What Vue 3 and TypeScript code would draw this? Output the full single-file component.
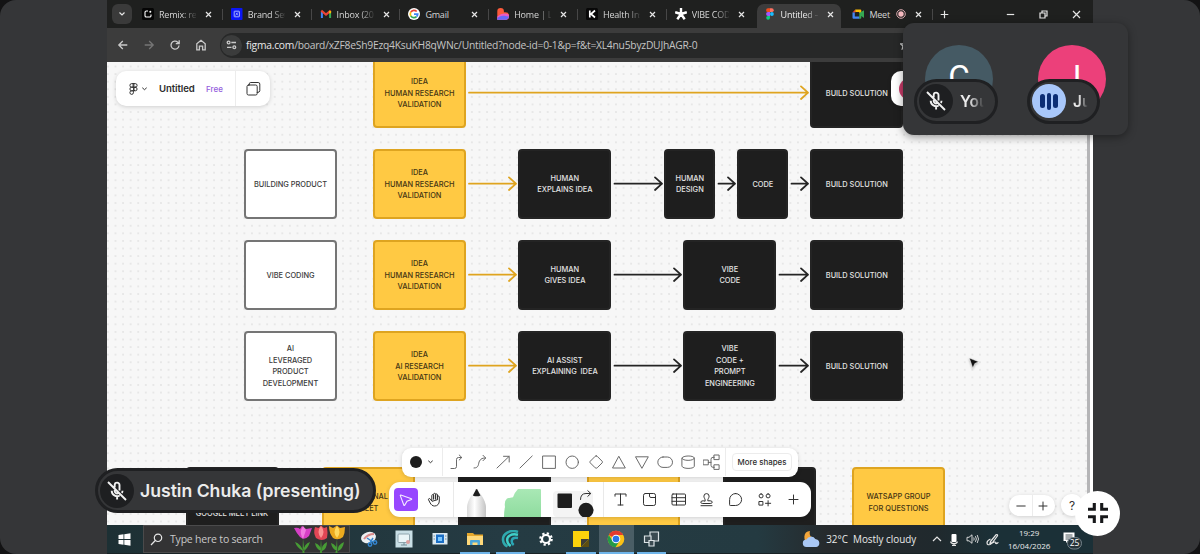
<script setup lang="ts">
interface Tab { icon: string; title: string; active?: boolean; rec?: boolean }
interface BoardNode { x: number; y: number; w: number; kind: 'plain' | 'gold' | 'dark'; lines: string[] }
interface Arrow { x1: number; x2: number; y: number; gold?: boolean }

const tabs: Tab[] = [
  { icon: 'remix', title: 'Remix: re' },
  { icon: 'brand', title: 'Brand Set' },
  { icon: 'gmail', title: 'Inbox (20' },
  { icon: 'google', title: 'Gmail' },
  { icon: 'lovable', title: 'Home | Lo' },
  { icon: 'k', title: 'Health Ins' },
  { icon: 'star', title: 'VIBE COD' },
  { icon: 'figma', title: 'Untitled –', active: true },
  { icon: 'meet', title: 'Meet', rec: true },
]

const idea = ['IDEA', 'HUMAN RESEARCH', 'VALIDATION']
const nodes: BoardNode[] = [
  { x: 266, y: -4.5, w: 93, kind: 'gold', lines: idea },
  { x: 703.3, y: -4.5, w: 93, kind: 'dark', lines: ['BUILD SOLUTION'] },

  { x: 137, y: 86.5, w: 93, kind: 'plain', lines: ['BUILDING PRODUCT'] },
  { x: 266, y: 86.5, w: 93, kind: 'gold', lines: idea },
  { x: 411.4, y: 86.5, w: 93, kind: 'dark', lines: ['HUMAN', 'EXPLAINS IDEA'] },
  { x: 557.4, y: 86.5, w: 51, kind: 'dark', lines: ['HUMAN', 'DESIGN'] },
  { x: 630.4, y: 86.5, w: 51, kind: 'dark', lines: ['CODE'] },
  { x: 703.3, y: 86.5, w: 93, kind: 'dark', lines: ['BUILD SOLUTION'] },

  { x: 137, y: 177.5, w: 93, kind: 'plain', lines: ['VIBE CODING'] },
  { x: 266, y: 177.5, w: 93, kind: 'gold', lines: idea },
  { x: 411.4, y: 177.5, w: 93, kind: 'dark', lines: ['HUMAN', 'GIVES IDEA'] },
  { x: 576.4, y: 177.5, w: 93, kind: 'dark', lines: ['VIBE', 'CODE'] },
  { x: 703.3, y: 177.5, w: 93, kind: 'dark', lines: ['BUILD SOLUTION'] },

  { x: 137, y: 268.5, w: 93, kind: 'plain', lines: ['AI', 'LEVERAGED', 'PRODUCT', 'DEVELOPMENT'] },
  { x: 266, y: 268.5, w: 93, kind: 'gold', lines: ['IDEA', 'AI RESEARCH', 'VALIDATION'] },
  { x: 411.4, y: 268.5, w: 93, kind: 'dark', lines: ['AI ASSIST', 'EXPLAINING  IDEA'] },
  { x: 576.4, y: 268.5, w: 93, kind: 'dark', lines: ['VIBE', 'CODE +', 'PROMPT', 'ENGINEERING'] },
  { x: 703.3, y: 268.5, w: 93, kind: 'dark', lines: ['BUILD SOLUTION'] },

  { x: 78.5, y: 405, w: 93, kind: 'dark', lines: ['', '', 'GOOGLE MEET LINK'] },
  { x: 214.7, y: 405, w: 93, kind: 'gold', lines: ['PERSONAL', 'MEET'] },
  { x: 351, y: 405, w: 93, kind: 'dark', lines: [] },
  { x: 480, y: 405, w: 93, kind: 'gold', lines: [] },
  { x: 616, y: 405, w: 93, kind: 'dark', lines: [] },
  { x: 745, y: 405, w: 93, kind: 'gold', lines: ['WATSAPP GROUP', 'FOR QUESTIONS'] },
]

const arrows: Arrow[] = [
  { x1: 362, x2: 701, y: 30.7, gold: true },
  { x1: 362, x2: 409, y: 121.7, gold: true },
  { x1: 507.5, x2: 555, y: 121.7 },
  { x1: 611.5, x2: 628, y: 121.7 },
  { x1: 684.5, x2: 701, y: 121.7 },
  { x1: 362, x2: 409, y: 212.7, gold: true },
  { x1: 507.5, x2: 574, y: 212.7 },
  { x1: 672.5, x2: 701, y: 212.7 },
  { x1: 362, x2: 409, y: 303.7, gold: true },
  { x1: 507.5, x2: 574, y: 303.7 },
  { x1: 672.5, x2: 701, y: 303.7 },
]
const arrowPath = (a: Arrow) => `M${a.x1} ${a.y}H${a.x2}M${a.x2 - 7} ${a.y - 6.3}L${a.x2} ${a.y}L${a.x2 - 7} ${a.y + 6.3}`

const shapes: string[] = [
  'M2 14.5h3.5q2 0 2-2v-7q0-2 2-2h3M10.2 1l2.6 2.5-2.6 2.5',
  'M2 14c5.500 0 4-4.500 5.500-7S10.500 4 13.500 4M11 1.300l2.700 2.700-2.700 2.700',
  'M2 14L14 2.500M8.500 2.300h5.700v5.700',
  'M2 14L14.200 2',
  'M2 2h12.400v12.400H2z',
  'M14.400 8.200a6.200 6.200 0 1 1-12.400 0a6.200 6.200 0 1 1 12.400 0z',
  'M8.200 1.900q.6 0 1 .4l5 5q.6.700 0 1.500l-5 5q-1 .9-2 0l-5-5q-.7-.8 0-1.500l5-5q.4-.4 1-.4z',
  'M8 2.600L14.300 14H1.900z',
  'M1.900 2.800h12.400L8.100 14z',
  'M6 3h4.300a5.200 5.200 0 0 1 0 10.400H6A5.200 5.200 0 0 1 6 3z',
  'M1.900 4.200c0-3 12.400-3 12.400 0v8c0 3-12.400 3-12.400 0zM1.900 4.200c0 3 12.400 3 12.400 0',
  'M.5 6h4.800v4.800H.5zM11.300 1h4.800v4.600h-4.800zM11.300 10.800h4.800v4.600h-4.800zM5.300 8.400h2.700M11.300 3.300H10q-2 0-2 2v6q0 2 2 2h1.300',
]

const tools: string[] = [
  'M3 5.200V3h11v2.200M8.500 3v11M6 14h5',
  'M4.300 2.500h8.400q1.800 0 1.800 1.800v8.400q0 1.800-1.800 1.800H4.300q-1.800 0-1.800-1.800V4.300q0-1.800 1.800-1.800zM8.500 2.500v2.500q0 1.500 1.500 1.500h4.500',
  'M3 3h11.500q1 0 1 1v9q0 1-1 1H3q-1 0-1-1V4q0-1 1-1zM2 6.700h13.500M2 10.300h13.500M6.500 3v11',
  'M3 14.700h11M7.200 9.800c.4-1.600-1.300-2.700-1.300-4.600a2.600 2.600 0 0 1 5.200 0c0 1.900-1.700 3-1.300 4.600h2.400q2 0 2 1.400 0 1.300-2 1.300H4.800q-2 0-2-1.300 0-1.400 2-1.400z',
  'M8.600 2.500a6 6 0 1 1 0 12H3.300q-.9 0-.7-.9V8.500a6 6 0 0 1 6-6z',
  'M5.100 2.900a2 2 0 1 1 0 4 2 2 0 0 1 0-4zM12.100 2.900a2 2 0 1 1 0 4 2 2 0 0 1 0-4zM3.300 10.500h3.600v3.600H3.300zM12.100 9.700v5.200M9.500 12.300h5.200',
  'M8.500 4v9M4 8.500h9',
]

const apps = ['snip', 'photo', 'mail', 'folder', 'edge', 'gear', 'notes', 'chrome', 'task']
const running = new Set(['folder', 'edge', 'notes', 'chrome', 'task'])
</script>

<template>
  <div class="screen">
    <div class="stage">
      <main class="share">
        <header class="tabstrip">
          <button class="tab-search"><svg width="8" height="6" viewBox="0 0 8 6"><path d="M1.500 1.500L4 4l2.500-2.500" class="lt" /></svg></button>
          <div class="tabs">
            <div v-for="t in tabs" :key="t.title" class="tab" :class="{ active: t.active }">
              <svg class="fav" width="12" height="12" viewBox="0 0 12 12">
                <template v-if="t.icon === 'remix'">
                  <rect width="12" height="12" rx="1.500" fill="#050505" />
                  <path d="M6 3H4.300Q3 3 3 4.300v3.400Q3 9 4.300 9h3.400Q9 9 9 7.700V6.500" fill="none" stroke="#fff" stroke-width="1.100" /><circle cx="8.300" cy="3.700" r="1" fill="#fff" />
                </template>
                <template v-else-if="t.icon === 'brand'">
                  <rect width="11.500" height="12" rx="1" fill="#0b16f5" />
                  <rect x="3.200" y="3.200" width="5.200" height="5.600" rx=".5" fill="none" stroke="#b9c3ff" stroke-width=".9" /><path d="M4.300 7.600l2.800-3.200M5 4.800l2 2.600" stroke="#b9c3ff" stroke-width=".7" />
                </template>
                <template v-else-if="t.icon === 'gmail'">
                  <path d="M1.900 10V3.500" stroke="#4285f4" stroke-width="2" /><path d="M10.100 10V3.500" stroke="#34a853" stroke-width="2" /><path d="M1.300 2.700L6 6.500l4.700-3.800" fill="none" stroke="#ea4335" stroke-width="2.200" />
                  <path d="M10.100 5.300V2.900" stroke="#fbbc04" stroke-width="2" />
                </template>
                <template v-else-if="t.icon === 'google'">
                  <circle cx="6" cy="6" r="6" fill="#fff" />
                  <g fill="none" stroke-width="1.700"><path d="M8.700 3.500A3.700 3.700 0 0 0 2.800 4.100" stroke="#ea4335" /><path d="M2.800 4.100a3.700 3.700 0 0 0 0 3.800" stroke="#fbbc04" /><path d="M2.800 7.900a3.700 3.700 0 0 0 5.700.8" stroke="#34a853" /><path d="M8.500 8.700A3.700 3.700 0 0 0 9.700 6.100H6" stroke="#4285f4" /></g>
                </template>
                <template v-else-if="t.icon === 'lovable'">
                  <path d="M.3 3.300a3.300 3.300 0 0 1 6.600 0v1h1.500a3.700 3.700 0 0 1 0 7.500H.3z" fill="#fc5a3a" /><path d="M.3 8.500q3.500-3 7-3 3.200 0 4.500 1.200a3.700 3.700 0 0 1-3.400 5.100H.3z" fill="#e85bc4" /><path d="M.3 9.800q4-2.500 7-2 2.600.4 4.600.8a3.700 3.700 0 0 1-3.500 3.200H.3z" fill="#6a68f5" />
                </template>
                <template v-else-if="t.icon === 'k'">
                  <rect width="12" height="12" rx="1.500" fill="#080808" /><path d="M3.800 2.500v7M9 2.500L5 6l4 3.500" fill="none" stroke="#fff" stroke-width="1.700" />
                </template>
                <template v-else-if="t.icon === 'star'">
                  <path d="M6 6V0M6 6l5.800-1.800M6 6l3.700 5.300M6 6l-3.700 5.300M6 6L.2 4.200" stroke="#fff" stroke-width="2.400" />
                </template>
                <template v-else-if="t.icon === 'figma'">
                  <path d="M6 .3H4a1.900 1.900 0 0 0 0 3.800h2z" fill="#f24e1e" /><path d="M6 .3h1.800a1.900 1.900 0 0 1 0 3.800H6z" fill="#ff7262" /><path d="M6 4.100H4a1.900 1.900 0 0 0 0 3.800h2z" fill="#a259ff" /><circle cx="7.900" cy="6" r="1.900" fill="#1abcfe" /><path d="M6 7.900H4a1.900 1.900 0 1 0 2 1.900z" fill="#0acf83" />
                </template>
                <template v-else>
                  <path d="M3.300 1.500v3H.5z" fill="#ea4335" /><path d="M3.300 1.500h5q1 0 1 1V5h-2V4H3.300z" fill="#fbbc04" /><path d="M.5 4.500h2.300v4H7.500v2.200H1.500q-1 0-1-1z" fill="#4285f4" /><path d="M7.300 5L12 2.300v7.600L9.300 8v1.700q0 1-1 1h-1z" fill="#34a853" />
                </template>
              </svg>
              <span class="title" :class="{ short: t.rec }">{{ t.title }}</span>
              <svg v-if="t.rec" class="rec" width="10" height="10" viewBox="0 0 10 10"><circle cx="5" cy="5" r="4.300" fill="none" stroke="#d8a9ae" /><circle cx="5" cy="5" r="2.700" fill="#f5b9bf" /></svg>
              <svg class="x" width="7" height="7" viewBox="0 0 7 7"><path d="M1 1l5 5M6 1L1 6" class="lt" /></svg>
            </div>
          </div>
          <svg class="plus" width="9" height="9" viewBox="0 0 9 9"><path d="M4.500.700v7.600M.700 4.500h7.600" class="lt" /></svg>
          <div class="winctl">
            <svg width="9" height="9" viewBox="0 0 9 9"><path d="M.8 4.500h7.400" class="lt" /></svg>
            <svg width="9" height="9" viewBox="0 0 9 9"><path d="M1 3h5v5H1zM3 3V1h5v5H6" class="lt" /></svg>
            <svg width="9" height="9" viewBox="0 0 9 9"><path d="M1 1l7 7M8 1L1 8" class="lt" /></svg>
          </div>
        </header>

        <div class="address">
          <svg width="12" height="12" viewBox="0 0 12 12"><path d="M10.300 6H2M5.800 2L1.800 6l4 4" class="nav" /></svg>
          <svg width="12" height="12" viewBox="0 0 12 12"><path d="M1.700 6H10M6.200 2l4 4-4 4" class="nav dim" /></svg>
          <svg width="12" height="12" viewBox="0 0 12 12"><path d="M10 6.500A4 4 0 1 1 8.700 3.200L10 4.400M10.200 1.200v3.400H6.800" class="nav" /></svg>
          <svg width="12" height="12" viewBox="0 0 12 12"><path d="M1.800 10.800V4.800L6 1.300l4.200 3.500v6H7.600V7.200H4.400v3.600z" class="nav" /></svg>
          <div class="field">
            <span class="tune"><svg width="11" height="10" viewBox="0 0 11 10"><g class="nav"><circle cx="2.600" cy="2.500" r="1.400" /><path d="M5.300 2.500H10M1 7.300h4.500" /><circle cx="8.300" cy="7.300" r="1.400" /></g></svg></span>
            <span class="url"><b>figma.com</b>/board/xZF8eSh9Ezq4KsuKH8qWNc/Untitled?node-id=0-1&amp;p=f&amp;t=XL4nu5byzDUJhAGR-0</span>
            <svg class="bookmark" width="10" height="10" viewBox="0 0 10 10"><path d="M5 .8l1.300 2.800 3 .3-2.200 2 .6 3L5 7.400 2.300 8.900l.6-3-2.200-2 3-.3z" class="nav" /></svg>
          </div>
        </div>

        <section class="board">
          <svg class="canvas" width="986" height="463" viewBox="0 0 986 463">
            <defs><pattern id="dots" x="-2.900" y=".7" width="7.583" height="7.583" patternUnits="userSpaceOnUse"><circle cx="3.800" cy="3.800" r=".75" fill="#d2d2d2" /></pattern></defs>
            <rect width="986" height="463" fill="url(#dots)" />
            <path v-for="(a, i) in arrows" :key="i" :d="arrowPath(a)" class="arrow" :class="{ gold: a.gold }" />
          </svg>
          <div v-for="(n, i) in nodes" :key="i" class="node" :class="n.kind" :style="{ left: n.x + 'px', top: n.y + 'px', width: n.w + 'px' }">
            <span v-for="(l, j) in n.lines" :key="j">{{ l }}</span>
          </div>

          <div class="float filebar">
            <svg class="figlogo" width="9" height="12" viewBox="0 0 9 12"><path d="M4.500.600H2.700a1.800 1.800 0 0 0 0 3.600h1.800zM4.500.600h1.800a1.800 1.800 0 0 1 0 3.600H4.500zM4.500 4.200H2.700a1.800 1.800 0 0 0 0 3.600h1.800zM6.300 4.200a1.800 1.800 0 1 1 0 3.600 1.800 1.800 0 0 1 0-3.600zM4.500 7.800H2.700a1.800 1.800 0 1 0 1.800 1.800z" class="ink" /></svg>
            <svg class="caret" width="5" height="4" viewBox="0 0 5 4"><path d="M.6 1l1.900 1.700L4.400 1" class="ink" /></svg>
            <strong>Untitled</strong><em>Free</em>
            <span class="pages"><svg width="15" height="15" viewBox="0 0 15 15"><path d="M2.500 4h7.200q1.500 0 1.500 1.500v7q0 1.500-1.500 1.500H2.500Q1 14 1 12.500v-7Q1 4 2.500 4zM3.300 4V2.800q0-1.300 1.500-1.300h7.400q1.600 0 1.600 1.600v6.700q0 1.700-2.600 1.700" class="ink" /></svg></span>
          </div>

          <div class="float sharebar"><i></i></div>

          <svg class="cursor" width="12" height="13" viewBox="0 0 12 13"><path d="M1.300 1l9.400 3.800-3.900 1.700-2 4.500z" fill="#111" stroke="#fff" stroke-width=".5" /></svg>

          <div class="float shapebar">
            <div class="swatch"><i></i><svg width="5" height="4" viewBox="0 0 5 4"><path d="M.6 1l1.900 1.700L4.400 1" class="ink" /></svg></div>
            <div class="shapes"><svg v-for="d in shapes" :key="d" width="16.500" height="16.500" viewBox="0 0 16.500 16.500"><path :d="d" class="shape" /></svg></div>
            <div class="more"><span>More shapes</span></div>
          </div>

          <div class="float toolbar">
            <div class="pointer-group">
              <span class="select"><svg width="14" height="14" viewBox="0 0 14 14"><path d="M1.800 2.100l10.600 3.600q.7.400 0 .8L8 8.200l-2.300 4q-.5.7-.8 0L1.300 2.600q-.1-.6.5-.5z" fill="none" stroke="#f4eaff" stroke-width="1.100" /></svg></span>
              <svg class="hand" width="15" height="15" viewBox="0 0 15 15"><path d="M4.800 8.500V3.600q0-1 .9-1t.9 1V7M6.600 7V2.300q0-1 1-1t1 1V7M8.600 7V2.900q0-1 .9-1t1 1V7.300M10.500 7.300V5q0-1 .9-1t.9 1v4c0 3-2 5-4.600 5-2.300 0-3.500-1.200-4.500-3L1.600 7.900q-.4-.9.300-1.300.8-.3 1.400.4L4.800 9z" class="ink" /></svg>
            </div>
            <div class="draw-group">
              <svg width="150" height="35" viewBox="0 0 150 35">
                <defs>
                  <linearGradient id="pen"><stop offset="0" stop-color="#d9d9d9" /><stop offset=".4" stop-color="#fff" /><stop offset="1" stop-color="#c4c4c4" /></linearGradient>
                  <linearGradient id="sticky" x2="0" y2="1"><stop offset="0" stop-color="#a9e8b5" /><stop offset="1" stop-color="#8fdc9f" /></linearGradient>
                </defs>
                <path d="M13 35V25c0-4 4-12 6.500-14h6c2.500 2 6.500 10 6.500 14v10z" fill="url(#pen)" />
                <path d="M18.800 13.500L22 7.500q.7-1 1.300 0l3.200 6q-3.800 1.700-7.700 0z" fill="#1e1e1e" />
                <path d="M64 7h22q1 0 1 1v27H50q0-6 1-10-1-6 2-8.500 3-.8 6-1.300 1-4 5-8.200z" fill="url(#sticky)" />
                <rect x="99" y="9" width="40" height="26" rx="4" fill="#f4f4f4" />
                <rect x="103.500" y="11.500" width="14.500" height="14.500" rx="1" fill="#1e1e1e" />
                <path d="M126.500 17.500q0-6 5.500-6h4.500M133.800 8.700l3 2.800-3 2.800" class="ink" />
                <circle cx="132" cy="28.300" r="7.500" fill="#1e1e1e" />
              </svg>
            </div>
            <div class="tools"><svg v-for="d in tools" :key="d" width="17" height="17" viewBox="0 0 17 17"><path :d="d" class="ink" /></svg></div>
          </div>

          <div class="float zoombar">
            <svg width="10" height="10" viewBox="0 0 10 10"><path d="M.8 5h8.400" class="ink" /></svg>
            <svg width="10" height="10" viewBox="0 0 10 10"><path d="M1 5h8M5 1v8" class="ink" /></svg>
          </div>
          <div class="float help">?</div>
          <i class="scrollbar"></i>
        </section>

        <footer class="taskbar">
          <div class="start"><svg width="13" height="13" viewBox="0 0 13 13"><path d="M.5 2l5-.7v4.800h-5zM6.300 1.200L12.500.300v5.800H6.300zM.5 6.900h5v4.800l-5-.7zM6.300 6.900h6.200v5.800l-6.200-.9z" fill="#fff" /></svg></div>
          <div class="search">
            <svg width="13" height="13" viewBox="0 0 13 13"><circle cx="8" cy="4.800" r="3.700" class="lt" /><path d="M5.300 7.500L1 12" class="lt" /></svg>
            <span>Type here to search</span>
            <svg class="tulips" width="54" height="28" viewBox="0 0 54 28">
              <g fill="#479c35"><path d="M10 13l1.500 15H9.500zM10 26Q4 23 2 17q6 2 8 9zM11 26q4-3 6-9-6 2-6.500 9zM28 14l1 14h-2zM28 26q-5-2-6-8 6 2 6 8zM29 26q5-2 5-9-6 3-5 9zM44 14l.5 14h-2zM44 26q-5-2-6-8 6 2 6 8zM45 26q5-2 6-9-7 3-6 9z" /></g>
              <path d="M1 3q4-1 6 1l2-3 4 3 6-1-3 8q-5 5-9 1-3-3-6-9z" fill="#d73fc6" /><path d="M10 1l3 4-3 9q-3-5-2-9z" fill="#ef79df" />
              <path d="M22 2l3.500 1L28 .5l3 2.500 3-1q1 6 0 11-5 4-11 0-3-5-1-11z" fill="#e24655" /><path d="M28 1q5 6 0 12-5-6 0-12z" fill="#f99594" />
              <path d="M36 1l4 2 4-2.500 3 2.500 5-1q0 6-2 10-5 4-10 1-4-5-4-12z" fill="#eda91e" /><path d="M44 1q5 6 0 12-5-6 0-12z" fill="#ffd95e" />
            </svg>
          </div>
          <div class="apps">
            <div v-for="a in apps" :key="a" class="app" :class="{ run: running.has(a), focus: a === 'chrome' }">
              <svg width="18" height="18" viewBox="0 0 18 18">
                <template v-if="a === 'snip'"><ellipse cx="8.500" cy="7.500" rx="7.500" ry="5.500" fill="#eceff1" transform="rotate(-15 8.500 7.500)" /><path d="M4 9q4-5 10-5" stroke="#d98a8a" stroke-width="2" fill="none" /><g fill="none" stroke="#3485cf" stroke-width="1.500"><path d="M7 8l6 4M13 8l-3 5" /><circle cx="15" cy="12.500" r="1.700" /><circle cx="10" cy="14.500" r="1.700" /></g></template>
                <template v-else-if="a === 'photo'"><rect x=".5" y=".5" width="17" height="17" fill="#c9dfe6" /><rect x="3" y="4" width="11.500" height="8.500" rx="1" fill="#eaf5f8" stroke="#8fa5ae" /><path d="M6 15h6M9 12.500V15" stroke="#728c96" /><circle cx="13" cy="12" r="2" fill="#dba0a0" /></template>
                <template v-else-if="a === 'mail'"><rect x="1.500" y="3" width="15" height="11.500" fill="#dbe9f1" /><rect x="5" y="4.500" width="8" height="8.500" fill="#1b6fc5" /><path d="M7 7h4v4H7z" fill="#7bc8ff" /><path d="M2.500 6h1.500M2.500 9h1.500M14 6h1.500M14 9h1.500" stroke="#75909f" /></template>
                <template v-else-if="a === 'folder'"><path d="M1 3h6l1.500 1.500H17V15H1z" fill="#e6a82c" /><path d="M1 6h16v9H1z" fill="#ffd97a" /><path d="M4 15v-4q0-1 1-1h8q1 0 1 1v4h-2.500v-2.500h-5V15z" fill="#4ba5d9" /></template>
                <template v-else-if="a === 'edge'"><g fill="none" stroke-width="2.500"><path d="M17 2C9-1 1.500 4 2 10q.5 4.500 4.500 6.500" stroke="#2fa9ae" /><path d="M17 4.800C10 3 5.800 6.500 6.200 10.500q.4 3.500 3.500 5.500" stroke="#3fcfc9" /><path d="M17 8q-6-1-6.300 3 0 2.500 2 4" stroke="#2ba5b4" /></g></template>
                <template v-else-if="a === 'gear'"><circle cx="9" cy="9" r="4" fill="none" stroke="#fff" stroke-width="2.200" /><circle cx="9" cy="9" r="5.700" fill="none" stroke="#fff" stroke-width="2.200" stroke-dasharray="2.240 2.240" /></template>
                <template v-else-if="a === 'notes'"><path d="M1 1h16v9l-7 7H1z" fill="#fbd20c" /><path d="M17 9v8H9z" fill="#5c4d12" /><path d="M9 17V9h8z" fill="#3d3d36" /></template>
                <template v-else-if="a === 'chrome'"><circle cx="9" cy="9" r="8.300" fill="#fbc116" /><path d="M9 9L1.800 4.900A8.300 8.300 0 0 1 16.200 4.900H9z" fill="#e33b2e" /><path d="M1.800 4.900A8.300 8.300 0 0 0 8.500 17.300L12.500 11 9 9 5 10z" fill="#249a48" /><circle cx="9" cy="9" r="4.300" fill="#fff" /><circle cx="9" cy="9" r="3.300" fill="#2a75e6" /></template>
                <template v-else><g fill="#3b4b52" stroke="#dce3e6" stroke-width="1.200"><path d="M7 2h8.500v9H7z" /><path d="M1.500 6h6.500v6.500H1.500z" /><path d="M6 10.500h5V16H6z" /></g></template>
              </svg>
            </div>
          </div>
          <div class="weather">
            <svg width="19" height="18" viewBox="0 0 19 18"><path d="M8 1a6 6 0 1 0 6 8A6 6 0 0 1 8 1z" fill="#f2a53a" /><path d="M4.500 17a3.700 3.700 0 0 1 0-7.400 5 5 0 0 1 9-.3 3.900 3.900 0 0 1 .8 7.700z" fill="#a9c8f5" /></svg>
            <span>32°C&nbsp; Mostly cloudy</span>
          </div>
          <div class="tray">
            <svg width="10" height="12" viewBox="0 0 10 12"><path d="M1 8l4-4 4 4" class="lt" /></svg>
            <svg width="10" height="13" viewBox="0 0 10 13"><rect x="2.500" y="1" width="5" height="8" rx="1" fill="#fff" /><path d="M1.700 8.500q0 2 3.300 2t3.300-2M5 10.500V12.500M3 12.300h4" class="lt" /></svg>
            <svg width="13" height="12" viewBox="0 0 13 12"><path d="M1 4.300h2l3-2.500v8.500L3 7.800H1zM7.700 4.500q1 1.500 0 3M9.400 3.200q2 2.800 0 5.600M11.200 2q2.600 4 0 8" class="lt thin" /></svg>
            <svg width="13" height="13" viewBox="0 0 13 13"><path d="M4.500 8.500L10 1.800q2-.8 1.500 1L6.500 9.500l-2.500.700zM4.500 6Q1 7.500 1 9.700q0 2.800 3 1.800 3-2 4.500-2.500 2-.2 1.300 1.500 1.700.2 2.500-1.300" class="lt" /></svg>
          </div>
          <div class="clock"><span>19:29</span><span>16/04/2026</span></div>
          <div class="notif"><svg width="20" height="19" viewBox="0 0 20 19"><path d="M1.500 1.500h11v8.500H6l-2 2v-2H1.500z" fill="#fff" /><path d="M3.500 4h7M3.500 6h7M3.500 8h4" stroke="#1e2d33" stroke-width=".8" /><rect x="5.500" y="6.500" width="14" height="11.500" rx="5.700" fill="#26343a" stroke="#75838a" /><text x="12.500" y="15.300" text-anchor="middle" fill="#fff" class="badge">25</text></svg></div>
        </footer>
      </main>
    </div>

    <aside class="people">
      <div class="person you">
        <span class="avatar">C</span>
        <div class="tag"><span class="disc"><svg width="22" height="22" viewBox="0 0 22 22"><path d="M8.700 7.500V5a2.400 2.400 0 0 1 4.800 0v5.500M8.700 10v1a2.400 2.400 0 0 0 3.400 2.200M5.700 10.800a5.400 5.400 0 0 0 8 4.700M16.500 10.800a5 5 0 0 1-.6 2.200M11.100 16v3.500M2 2l18 18" class="mic" /></svg></span><span class="who">You</span></div>
      </div>
      <div class="person host">
        <span class="avatar">J</span>
        <div class="tag"><span class="disc speaking"><i></i><i></i><i></i></span><span class="who">Ju</span></div>
      </div>
    </aside>

    <div class="tag presenter"><span class="disc"><svg width="22" height="22" viewBox="0 0 22 22"><path d="M8.700 7.500V5a2.400 2.400 0 0 1 4.800 0v5.500M8.700 10v1a2.400 2.400 0 0 0 3.400 2.200M5.700 10.800a5.400 5.400 0 0 0 8 4.700M16.500 10.800a5 5 0 0 1-.6 2.200M11.100 16v3.500M2 2l18 18" class="mic" /></svg></span><span>Justin Chuka (presenting)</span></div>

    <button class="exit"><svg width="22" height="22" viewBox="0 0 22 22"><path d="M7.300 1v6.300H1M14.700 1v6.300H21M7.300 21v-6.300H1M14.700 21v-6.300H21" fill="none" stroke="#17181a" stroke-width="3.100" /></svg></button>
  </div>
</template>

<style>
body { margin: 0; background: #131314; overflow: hidden; }
</style>

<style scoped>
* { box-sizing: border-box; }
svg { flex: none; display: block; }
button { border: 0; padding: 0; }
.screen { position: relative; width: 1200px; height: 554px; background: #131314; overflow: hidden; font-family: "Open Sans", "Noto Sans", sans-serif; }
.stage { height: 554px; background: #353638; border-radius: 16px; overflow: hidden; }
.share { width: 986px; height: 554px; margin-left: 107px; display: flex; flex-direction: column; }
.lt { fill: none; stroke: #e6e6e6; stroke-width: 1.2; }
.thin { stroke-width: .9; }
.nav { fill: none; stroke: #c9c9c9; stroke-width: 1.300; }
.dim { stroke: #757575; }
.ink { fill: none; stroke: #333; stroke-width: 1; stroke-linejoin: round; stroke-linecap: round; }

.tabstrip { height: 28px; background: #1f201f; display: flex; align-items: center; flex: none; }
.tab-search { width: 20px; height: 20px; margin-left: 5px; border-radius: 6px; background: #3a3a3a; display: grid; place-items: center; flex: none; }
.tabs { display: flex; height: 28px; margin-left: 2px; flex: none; }
.tab { width: 88.8px; display: flex; align-items: center; padding-left: 8px; position: relative; color: #d6d6d6; font-size: 9px; }
.tab::after { content: ""; position: absolute; right: 0; top: 9px; height: 11px; width: 1px; background: #474747; }
.tab:nth-child(7)::after, .tab.active::after { display: none; }
.tab.active { color: #eee; }
.tab.active::before { content: ""; position: absolute; left: 1px; right: 3px; top: 4px; bottom: 0; background: #3c3c3c; border-radius: 7px 7px 0 0; }
.tab > * { position: relative; }
.title { width: 37px; margin-left: 5px; white-space: nowrap; letter-spacing: -.2px; -webkit-mask-image: linear-gradient(90deg, #000 62%, transparent 105%); mask-image: linear-gradient(90deg, #000 62%, transparent 105%); }
.tab:nth-child(4) .title, .title.short { -webkit-mask-image: none; mask-image: none; }
.title.short { width: 22px; }
.rec { margin-left: 5px; }
.x { margin-left: 9px; }
.plus { margin-left: 7px; }
.winctl { display: flex; gap: 24px; margin-left: 57px; }

.address { height: 34px; flex: none; background: #3c3c3c; display: flex; align-items: center; padding-left: 10px; gap: 14px; }
.field { margin-left: -1px; height: 25px; width: 766px; border-radius: 13px; background: #272828; display: flex; align-items: center; padding-left: 1px; }
.tune { width: 21px; height: 21px; border-radius: 50%; background: #3b3c3c; display: grid; place-items: center; margin-left: 0; flex: none; }
.url { color: #c4c4c4; font-size: 10.3px; letter-spacing: -.24px; margin-left: 4px; white-space: nowrap; width: 654px; }
.url b { color: #e9e9e9; font-weight: 400; }

.board { position: relative; flex: none; height: 463px; background: #f7f7f7; overflow: hidden; }
.canvas { position: absolute; left: 0; top: 0; }
.arrow { fill: none; stroke: #242424; stroke-width: 1.800; stroke-linecap: round; stroke-linejoin: round; }
.arrow.gold { stroke: #dfa41f; }
.node { position: absolute; height: 70.5px; border-radius: 4px; border: 2px solid; display: flex; flex-direction: column; align-items: center; justify-content: center; padding-top: 1px; font: 500 7.4px/11.4px Inter, sans-serif; white-space: pre; }
.node span { height: 11.4px; }
.plain { background: #fff; border-color: #757575; color: #3a3a3a; }
.gold { background: #ffc943; border-color: #dea420; color: #453513; }
.dark { background: #1e1e1e; border-color: #242424; color: #e4e4e4; }

.float { position: absolute; background: #fff; display: flex; align-items: center; box-shadow: 0 1px 4px rgba(0, 0, 0, .16); }
.filebar { left: 9px; top: 9px; width: 154px; height: 35px; border-radius: 10px; padding-left: 13px; font-family: Inter, sans-serif; }
.caret { margin-left: 4px; }
.filebar strong { font-size: 9.600px; font-weight: 600; letter-spacing: -.1px; color: #2c2c2c; margin-left: 12px; width: 47px; }
.filebar em { font-style: normal; font-size: 8px; font-weight: 500; color: #9460dd; width: 29px; }
.pages { height: 35px; flex: 1; border-left: 1px solid #ececec; display: grid; place-items: center; }
.sharebar { left: 784px; top: 9px; width: 60px; height: 35px; border-radius: 10px; }
.sharebar i { width: 22px; height: 22px; border-radius: 50%; background: #c83b69; margin-left: 8px; }
.cursor { position: absolute; left: 861px; top: 295px; filter: drop-shadow(0 1px 1px rgba(0, 0, 0, .3)); }

.shapebar { left: 295px; top: 386px; width: 396px; height: 28.500px; border-radius: 9px; }
.swatch { width: 41px; height: 28px; padding-left: 8px; border-right: 1px solid #ececec; display: flex; align-items: center; gap: 6px; }
.swatch i { width: 12px; height: 12px; border-radius: 50%; background: #1e1e1e; }
.shapes { display: flex; gap: 6.600px; padding-left: 6px; width: 283px; height: 28px; align-items: center; border-right: 1px solid #ececec; }
.shape { fill: none; stroke: #626262; stroke-width: .95; stroke-linejoin: round; stroke-linecap: round; }
.more { flex: 1; display: flex; justify-content: center; }
.more span { width: 60px; height: 18px; border: 1px solid #ececec; border-radius: 4px; font: 500 7.900px/16px Inter, sans-serif; text-align: center; color: #2c2c2c; }
.toolbar { left: 282px; top: 420px; width: 422px; height: 35px; border-radius: 11px; overflow: hidden; }
.pointer-group { width: 64.500px; height: 35px; display: flex; align-items: center; padding-left: 5px; gap: 9.500px; border-right: 1px solid #e9e9e9; }
.select { width: 23.500px; height: 23.500px; border-radius: 4px; background: #9747ff; display: grid; place-items: center; }
.draw-group { width: 150px; height: 35px; border-right: 1px solid #e9e9e9; overflow: hidden; }
.tools { display: flex; gap: 11.800px; padding-left: 8.500px; }
.zoombar { left: 902px; top: 433px; width: 46px; height: 21px; border-radius: 11px; padding-left: 6.500px; gap: 12px; }
.zoombar::before { content: ""; position: absolute; left: 23px; top: 0; width: 1px; height: 21px; background: #ececec; }
.help { left: 954px; top: 432px; width: 22px; height: 22px; border-radius: 50%; justify-content: center; color: #333; font: 12px Inter, sans-serif; }
.scrollbar { position: absolute; right: 0; top: 0; width: 6px; height: 463px; border-left: 3px solid #b5b5b7; background: #fff; }

.taskbar { height: 29px; flex: none; display: flex; align-items: center; color: #eaeaea; background: linear-gradient(90deg, #1d3034 0, #253b43 40%, #243a41 66%, #262a2d 73%, #20292d 84%, #1b3037 90%, #1b3037 100%); border-bottom: 1px solid #182225; }
.start { width: 36px; display: grid; place-items: center; }
.start svg { margin-left: -2px; }
.search { width: 207px; height: 28px; background: #333334; border: 1px solid #4a4a4b; display: flex; align-items: center; padding-left: 6px; font-size: 10.500px; color: #c8c8c8; }
.search > span { width: 120px; margin-left: 7px; letter-spacing: -.2px; white-space: nowrap; }
.tulips { margin-left: 3px; }
.apps { display: flex; height: 29px; margin-left: 1.500px; }
.app { width: 35.300px; display: grid; place-items: center; position: relative; }
.app.focus { background: #4a5d65; }
.app.run::after { content: ""; position: absolute; left: 3px; right: 3px; bottom: 0; height: 2px; background: #6fb5ea; z-index: 1; }
.app.focus::after { left: 0; right: 0; }
.weather { display: flex; align-items: center; gap: 5px; margin-left: 133px; font-size: 9.900px; white-space: nowrap; width: 130px; }
.tray { display: flex; align-items: center; gap: 7px; }
.clock { width: 60px; display: flex; flex-direction: column; align-items: center; font-size: 8px; line-height: 13px; }
.notif { margin-left: 3px; }
.notif svg { position: relative; top: 1px; }
.badge { font: 8.500px "Open Sans", sans-serif; }

.tag { display: flex; align-items: center; height: 45px; border: 3px solid #1f2022; border-radius: 23px; background: #353638; color: #ececec; font-family: Inter, sans-serif; font-weight: 600; padding-left: 2px; }
.disc { width: 34px; height: 34px; border-radius: 50%; background: #1e1f21; display: flex; align-items: center; justify-content: center; flex: none; }
.mic { fill: none; stroke: #f1f1f1; stroke-width: 1.900; }
.people { position: absolute; left: 903px; top: 23px; width: 225px; height: 112px; border-radius: 11px; background: #353638; box-shadow: 0 2px 8px rgba(0, 0, 0, .4); display: flex; padding: 22px 0 0 11px; }
.person { width: 113px; display: flex; flex-direction: column; }
.avatar { width: 68px; height: 68px; border-radius: 50%; background: #455a64; color: #fff; font: 33px/66px Roboto, sans-serif; text-align: center; flex: none; margin-left: 11px; }
.host .avatar { background: #ec407a; }
.person .tag { margin-top: -34.500px; position: relative; width: 84px; flex: none; font-size: 15.500px; }
.host .tag { width: 73px; }
.speaking { background: #a8c7fa; gap: 2.200px; }
.speaking i { width: 4.500px; height: 14px; border-radius: 3px; background: #0b2d74; }
.speaking i:nth-child(2) { height: 17px; }
.who { margin-left: 7px; width: 26px; -webkit-mask-image: linear-gradient(90deg, #000 35%, transparent 92%); mask-image: linear-gradient(90deg, #000 35%, transparent 92%); }
.host { margin-left: 0; }
.host .who { width: 16px; }
.presenter { position: absolute; left: 94.500px; top: 468px; width: 281.500px; font-size: 17.600px; gap: 6.500px; white-space: nowrap; }
.exit { position: absolute; left: 1075px; top: 490.500px; width: 45px; height: 45px; border-radius: 50%; background: #fff; display: grid; place-items: center; }
.person { flex: none; }
</style>
